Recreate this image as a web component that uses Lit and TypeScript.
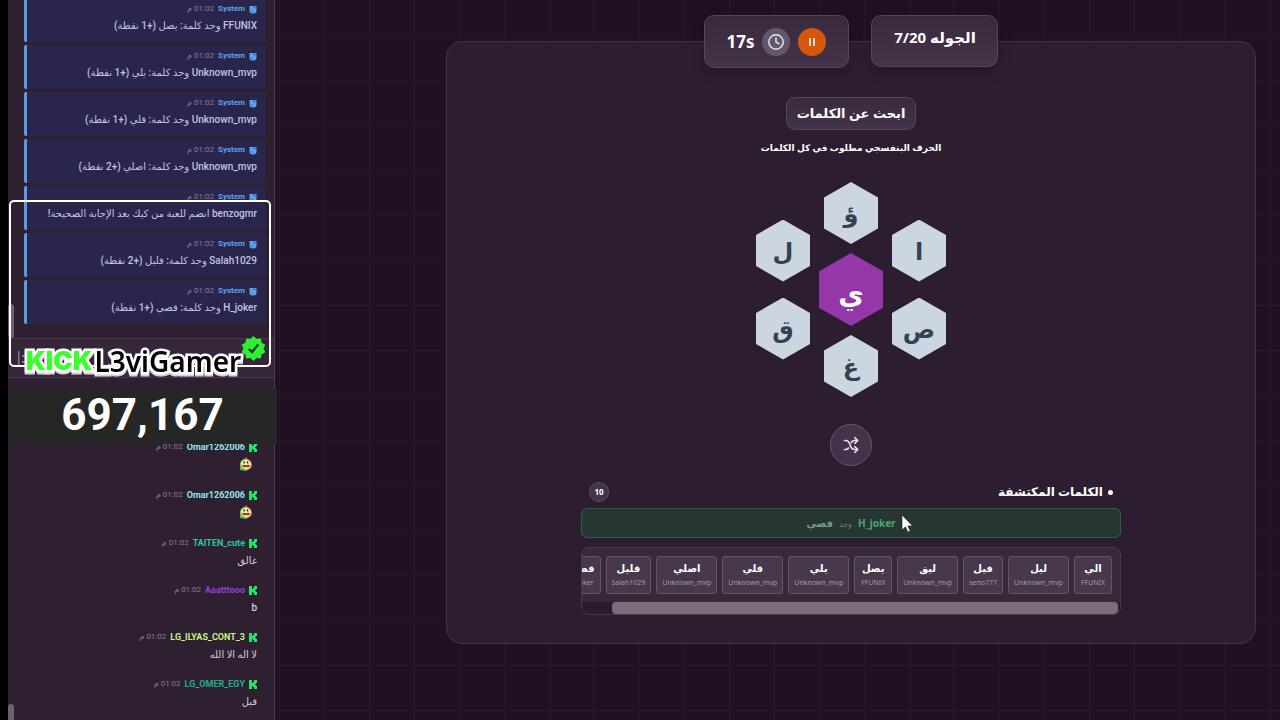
import { LitElement, html, css, svg } from "lit";
import { customElement, property } from "lit/decorators.js";

interface SystemLine {
  text: string;
}
interface ChatLine {
  user: string;
  tone: string;
  text?: string;
}
interface FoundWord {
  word: string;
  by: string;
}

const SYSTEM: SystemLine[] = [
  { text: "FFUNIX وجد كلمة: يصل (+1 نقطة)" },
  { text: "Unknown_mvp وجد كلمة: يلي (+1 نقطة)" },
  { text: "Unknown_mvp وجد كلمة: قلي (+1 نقطة)" },
  { text: "Unknown_mvp وجد كلمة: اصلي (+2 نقطة)" },
  { text: "benzogmr انضم للعبة من كيك بعد الإجابة الصحيحة!" },
  { text: "Salah1029 وجد كلمة: قليل (+2 نقطة)" },
  { text: "H_joker وجد كلمة: قصي (+1 نقطة)" },
];

const CHAT: ChatLine[] = [
  { user: "Omar1262006", tone: "ice" },
  { user: "Omar1262006", tone: "ice" },
  { user: "TAITEN_cute", tone: "mint", text: "غالق" },
  { user: "Aaatttooo", tone: "violet", text: "b" },
  { user: "LG_ILYAS_CONT_3", tone: "lime", text: "لا اله الا الله" },
  { user: "LG_OMER_EGY", tone: "teal", text: "قبل" },
];

const WORDS: FoundWord[] = [
  { word: "الي", by: "FFUNIX" },
  { word: "ليل", by: "Unknown_mvp" },
  { word: "قيل", by: "seno777" },
  { word: "ليق", by: "Unknown_mvp" },
  { word: "يصل", by: "FFUNIX" },
  { word: "يلي", by: "Unknown_mvp" },
  { word: "قلي", by: "Unknown_mvp" },
  { word: "اصلي", by: "Unknown_mvp" },
  { word: "قليل", by: "Salah1029" },
  { word: "قصي", by: "H_joker" },
];

const badgePoints = Array.from({ length: 20 }, (_, i) => {
  const r = i % 2 ? 9.6 : 12;
  const a = (i * Math.PI) / 10;
  return `${(12 + r * Math.sin(a)).toFixed(2)},${(12 - r * Math.cos(a)).toFixed(2)}`;
}).join(" ");

const kickIcon = html`<svg class="mark" viewBox="0 0 8 9" aria-hidden="true">
  <path fill="#1fe56b" d="M0 0h3v3h1V2h1V0h3v3H7v1H6v1h1v1h1v3H5V7H4V6H3v3H0z" />
</svg>`;

const systemIcon = html`<svg class="mark" viewBox="0 0 8 9" aria-hidden="true">
  <path fill="#5ea3ee" d="M.5 1h7v4.500a3 3 0 0 1-3 3h-1A3 3 0 0 1 .5 5.500z" />
  <path stroke="#2b3f86" stroke-width=".6" fill="none" d="M4.800 1v1.800H7.500M2 5.500l2 1.200" />
</svg>`;

const emote = html`<svg class="emote" viewBox="0 0 14 14" aria-hidden="true">
  <path fill="#e0432c" d="M4 3 7 0l2 2 3 2 1.500 4-2 4-3-1z" />
  <path fill="#4fbd4a" d="M1 13V6a6 5 0 0 1 6-4l4 3v7l-4 2z" />
  <ellipse cx="7" cy="7.500" rx="5.200" ry="5" fill="#e9f2a9" />
  <path stroke="#2a2030" stroke-width="1.300" d="M5.200 4.200v2.300M8.600 4.200v2.300" />
  <path fill="#c92f22" d="M2.500 8h9l-1.500 2.200H4z" />
</svg>`;

@customElement("chat-entry")
export class ChatEntry extends LitElement {
  @property() user = "";
  @property() tone = "";
  @property() text = "";
  @property({ type: Boolean }) system = false;

  static styles = css`
    :host {
      display: block;
      direction: rtl;
      color: #d6cbdc;
      font-family: Roboto, "DejaVu Sans", sans-serif;
    }
    .entry {
      padding: 6px 9px 8px 12px;
      height: 30px;
      display: flex;
      flex-direction: column;
      gap: 4px;
      margin-bottom: 3px;
    }
    .entry.sys {
      padding-top: 5px;
      padding-bottom: 9px;
      gap: 3px;
      background: #29254b;
      border-left: 3px solid #5b9be6;
      border-radius: 2px;
      color: #c0c3e6;
    }
    .entry.pic {
      margin-bottom: 4px;
    }
    .head {
      display: flex;
      align-items: center;
      gap: 4px;
      height: 12px;
      line-height: 12px;
      font-size: 9px;
    }
    .mark {
      width: 8px;
      height: 9px;
    }
    .user {
      font-weight: 700;
    }
    .sys .user {
      font-size: 8px;
    }
    .time {
      font-size: 8px;
      color: #8b7d93;
    }
    .body {
      font-size: 10px;
      line-height: 16px;
      font-weight: 500;
      white-space: nowrap;
    }
    .emote {
      display: block;
      width: 14px;
      height: 14px;
      margin-right: 4px;
    }
    .blue { color: #5ea3ee; }
    .ice { color: #90ece9; }
    .mint { color: #2cc6a1; }
    .violet { color: #8d43d0; }
    .lime { color: #c5f58b; }
    .teal { color: #19b08c; }
  `;

  render() {
    const kind = this.system ? "sys" : this.text ? "" : "pic";
    return html`<article class="entry ${kind}">
      <div class="head">
        ${this.system ? systemIcon : kickIcon}
        <bdi class="user ${this.tone}">${this.user}</bdi>
        <span class="time">01:02 م</span>
      </div>
      ${this.text ? html`<div class="body">${this.text}</div>` : emote}
    </article>`;
  }
}

@customElement("hex-letter")
export class HexLetter extends LitElement {
  @property() letter = "";
  @property({ type: Boolean, reflect: true }) main = false;

  static styles = css`
    :host {
      display: block;
    }
    .hex {
      display: grid;
      place-items: center;
      width: 54px;
      height: 62px;
      padding: 0;
      border: 0;
      clip-path: polygon(50% 0, 100% 25%, 100% 75%, 50% 100%, 0 75%, 0 25%);
      background: #cbd6e0;
      color: #334155;
      font: 700 24px/32px "Noto Sans", "DejaVu Sans", sans-serif;
    }
    .hex.main {
      width: 64px;
      height: 73px;
      padding-top: 6px;
      background: #9437a8;
      color: #fff;
      font-size: 28px;
    }
  `;

  render() {
    return html`<button class="hex ${this.main ? "main" : ""}" type="button">${this.letter}</button>`;
  }
}

@customElement("app-root")
export class AppRoot extends LitElement {
  static styles = css`
    :host {
      display: block;
      height: 100vh;
      overflow: hidden;
      font-family: "Noto Sans", "DejaVu Sans", sans-serif;
      color: #fff;
      background: #000;
    }
    .shell {
      display: flex;
      height: 100%;
      padding-left: 8px;
      position: relative;
      box-sizing: border-box;
    }
    .side {
      width: 266px;
      flex: none;
      display: flex;
      flex-direction: column;
      background: #2e1f31;
      border-right: 1px solid #4c3b50;
    }
    .feed {
      overflow: hidden;
      display: flex;
      flex-direction: column;
      justify-content: flex-end;
      position: relative;
    }
    .feed.top {
      height: 47%;
      padding: 0 8px 0 16px;
    }
    .feed.top .pad {
      flex: none;
      height: 11px;
    }
    .feed.live {
      flex: 1;
      padding: 0 8px 0 16px;
    }
    .feed.live .pad {
      flex: none;
      height: 1px;
    }
    .thumb {
      position: absolute;
      left: 0;
      bottom: 0;
      width: 6px;
      height: 34px;
      border-radius: 3px;
      background: #6d6170;
    }
    .thumb.short {
      height: 16px;
      border-radius: 3px 3px 0 0;
    }
    .compose {
      display: flex;
      align-items: center;
      gap: 8px;
      height: 38px;
      padding: 0 10px;
      border-top: 1px solid #46364a;
      border-bottom: 1px solid #46364a;
      background: #35263a;
      direction: rtl;
    }
    .compose input {
      flex: 1;
      min-width: 0;
      border: 0;
      padding: 0;
      background: none;
      color: #d6cbdc;
      font: 10px/16px "Noto Sans", "DejaVu Sans", sans-serif;
    }
    .compose button {
      display: grid;
      place-items: center;
      width: 8px;
      height: 14px;
      padding: 0;
      border: 0;
      background: none;
    }

    .frame {
      position: absolute;
      left: 9px;
      top: 200px;
      width: 258px;
      height: 163px;
      border: 2px solid #fff;
      border-radius: 5px;
    }
    .brand {
      position: absolute;
      left: 26px;
      top: 344px;
      display: flex;
      align-items: center;
      gap: 2px;
      height: 34px;
      line-height: 34px;
      direction: ltr;
    }
    .kick,
    .name {
      paint-order: stroke fill;
      filter: drop-shadow(0 2px 0 #d9cfdc);
    }
    .kick {
      font: 900 26px/34px Inter, sans-serif;
      color: #39ff2c;
      -webkit-text-stroke: 5px #fff;
    }
    .name {
      font: 600 28px/34px "Noto Sans", sans-serif;
      color: #060606;
      -webkit-text-stroke: 5px #fff;
    }
    .verified {
      position: absolute;
      left: 241px;
      top: 336px;
      width: 25px;
      height: 25px;
    }
    .counter {
      position: absolute;
      left: 8px;
      top: 389px;
      width: 269px;
      height: 55px;
      background: #262626;
      text-align: center;
      font: 700 44px/53px Roboto, sans-serif;
    }

    .main {
      flex: 1;
      min-width: 0;
      padding: 15px 24px 0 171px;
      background-color: #201022;
      background-image: linear-gradient(#28162b 1px, transparent 1px),
        linear-gradient(90deg, #28162b 1px, transparent 1px);
      background-size: 45px 45px;
      background-position: 4px 35px;
    }
    .status {
      display: flex;
      justify-content: center;
      align-items: flex-start;
      gap: 22px;
      position: relative;
    }
    .chip {
      box-sizing: border-box;
      border: 1px solid #55445a;
      border-radius: 10px;
      background: linear-gradient(#39293d, #44344a);
    }
    .timer {
      display: flex;
      align-items: center;
      gap: 8px;
      height: 53px;
      padding: 0 22px;
      font-size: 17px;
      font-weight: 700;
    }
    .timer,
    .round {
      box-shadow: 0 6px 14px #0003;
    }
    .dot {
      display: grid;
      place-items: center;
      width: 28px;
      height: 28px;
      padding: 0;
      border: 0;
      border-radius: 50%;
      background: #62566a;
    }
    .dot.pause {
      background: #d4570d;
    }
    .round {
      height: 52px;
      width: 127px;
      padding-top: 10px;
      text-align: center;
      direction: rtl;
      font-size: 15px;
      line-height: 22px;
      font-weight: 700;
    }
    .card {
      margin-top: -27px;
      padding: 55px 134px 28px;
      border: 1px solid #43334a;
      border-radius: 16px;
      background: #2c1e30;
      display: flex;
      flex-direction: column;
      align-items: center;
      direction: rtl;
    }
    .title {
      margin: 0;
      height: 33px;
      padding: 0 10px;
      border-radius: 9px;
      font-size: 13px;
      line-height: 31px;
      font-weight: 700;
    }
    .hint {
      margin: 10px 0 0;
      font-size: 9px;
      line-height: 16px;
      font-weight: 700;
    }
    .board {
      display: flex;
      align-items: center;
      gap: 9px;
      margin-top: 26px;
      direction: ltr;
    }
    .column {
      display: flex;
      flex-direction: column;
      align-items: center;
      gap: 16px;
    }
    .column.mid {
      gap: 9px;
    }
    .shuffle {
      display: grid;
      place-items: center;
      width: 42px;
      height: 42px;
      margin-top: 27px;
      padding: 0;
      border: 1px solid #65556a;
      border-radius: 50%;
      background: #43334a;
    }
    .words {
      width: 100%;
      margin-top: 16px;
    }
    .wordhead {
      display: flex;
      align-items: center;
      height: 20px;
      padding: 0 8px;
      gap: 5px;
    }
    .bullet {
      width: 5px;
      height: 5px;
      border-radius: 50%;
      background: #fff;
    }
    .wordhead h2 {
      margin: 0;
      flex: 1;
      font-size: 12px;
      line-height: 20px;
    }
    .count {
      box-sizing: border-box;
      width: 20px;
      height: 20px;
      border: 1px solid #5d4d62;
      border-radius: 50%;
      background: #43334a;
      text-align: center;
      font-size: 8px;
      line-height: 18px;
      font-weight: 700;
    }
    .latest {
      display: flex;
      align-items: center;
      justify-content: center;
      gap: 6px;
      box-sizing: border-box;
      height: 30px;
      margin-top: 6px;
      border: 1px solid #2c5d4b;
      border-radius: 6px;
      background: #273533;
      font-size: 10px;
      font-weight: 700;
      color: #6f9f87;
    }
    .latest .who {
      color: #49a873;
    }
    .latest .verb {
      font-size: 8px;
      font-weight: 400;
      color: #6c7d78;
    }
    .strip {
      margin-top: 9px;
      border: 1px solid #48384d;
      border-radius: 8px;
      background: #38283c;
      overflow: hidden;
    }
    .row {
      display: flex;
      gap: 5px;
      padding: 8px;
      overflow: hidden;
    }
    .word {
      flex: none;
      box-sizing: border-box;
      height: 38px;
      min-width: 38px;
      padding: 3px 5px 0;
      border: 1px solid #64546a;
      border-radius: 3px;
      background: #48384d;
      text-align: center;
      font-size: 10px;
      line-height: 17px;
      font-weight: 700;
    }
    .by {
      display: block;
      font-size: 7px;
      line-height: 12px;
      font-weight: 400;
      color: #a396aa;
    }
    .track {
      height: 12px;
      padding: 0 2px 0 30px;
      background: #2a1c2e;
    }
    .grip {
      height: 12px;
      border-radius: 4px;
      background: #7d6d7b;
    }
    .cursor {
      position: absolute;
      left: 901px;
      top: 514px;
      width: 12px;
      height: 19px;
    }
  `;

  render() {
    return html`<div class="shell">
      <aside class="side">
        <section class="feed top">
          ${SYSTEM.map(
            (m) => html`<chat-entry system user="System" tone="blue" .text=${m.text}></chat-entry>`,
          )}
          <div class="pad"></div>
          <div class="thumb"></div>
        </section>
        <form class="compose">
          <input type="text" aria-label="رسالة" />
          <button type="button" aria-label="خيارات">
            <svg width="8" height="14" viewBox="0 0 8 14" fill="#85778b">
              <path d="M0 0h1.500v14H0zM4 4h3v2H4zM4 10h3v2H4z" />
            </svg>
          </button>
        </form>
        <section class="feed live">
          ${CHAT.map(
            (m) => html`<chat-entry .user=${m.user} .tone=${m.tone} .text=${m.text ?? ""}></chat-entry>`,
          )}
          <div class="pad"></div>
          <div class="thumb short"></div>
        </section>
      </aside>

      <main class="main">
        <header class="status">
          <div class="chip timer">
            <span class="secs">17s</span>
            <span class="dot">
              <svg width="18" height="18" viewBox="0 0 18 18" fill="none" stroke="#e9e3ec" stroke-width="1.500" stroke-linecap="round">
                <circle cx="9" cy="9" r="7.200" />
                <path d="M9 4.800V9l3 1.800" />
              </svg>
            </span>
            <button class="dot pause" type="button" aria-label="إيقاف مؤقت">
              <svg width="8" height="8" viewBox="0 0 8 8" fill="#f6d9c4">
                <rect x="1" width="2" height="8" />
                <rect x="5" width="2" height="8" />
              </svg>
            </button>
          </div>
          <div class="chip round">الجوله 7/20</div>
        </header>

        <section class="card">
          <h1 class="chip title">ابحث عن الكلمات</h1>
          <p class="hint">الحرف البنفسجي مطلوب في كل الكلمات</p>
          <div class="board">
            <div class="column">
              <hex-letter letter="ل"></hex-letter>
              <hex-letter letter="ق"></hex-letter>
            </div>
            <div class="column mid">
              <hex-letter letter="ؤ"></hex-letter>
              <hex-letter main letter="ي"></hex-letter>
              <hex-letter letter="غ"></hex-letter>
            </div>
            <div class="column">
              <hex-letter letter="ا"></hex-letter>
              <hex-letter letter="ص"></hex-letter>
            </div>
          </div>
          <button class="shuffle" type="button" aria-label="خلط">
            <svg width="16" height="18" viewBox="0 0 16 18" fill="none" stroke="#e6dfe9" stroke-width="1.600" stroke-linecap="round" stroke-linejoin="round">
              <path d="M1.500 4.500h1.500c2 0 3 1.300 3.800 3.500l.8 2.200c.8 2.200 1.900 3.300 3.900 3.300h3" />
              <path d="M1.500 13.500h1.300c1.200 0 2-.5 2.700-1.500M8.300 6.500c.7-1.300 1.600-2 3-2h3.200" />
              <path d="m11.800 1.700 2.900 2.800-2.900 2.800M11.800 10.700l2.900 2.800-2.900 2.800" />
            </svg>
          </button>

          <section class="words">
            <div class="wordhead">
              <span class="bullet"></span>
              <h2>الكلمات المكتشفة</h2>
              <span class="count">10</span>
            </div>
            <div class="latest">
              <bdi class="who">H_joker</bdi>
              <span class="verb">وجد</span>
              <span>قصي</span>
            </div>
            <div class="strip">
              <div class="row">
                ${WORDS.map(
                  (w) => html`<div class="word">${w.word}<bdi class="by">${w.by}</bdi></div>`,
                )}
              </div>
              <div class="track"><div class="grip"></div></div>
            </div>
          </section>
        </section>
      </main>

      <div class="frame"></div>
      <div class="brand"><span class="kick">KICK</span><span class="name">L3viGamer</span></div>
      <svg class="verified" viewBox="0 0 24 24" aria-hidden="true">
        ${svg`<polygon points=${badgePoints} fill="#2fee35" />`}
        <path d="m7.500 12.500 3.200 3L16.500 8" fill="none" stroke="#0d3a12" stroke-width="2.200" />
      </svg>
      <div class="counter">697,167</div>
      <svg class="cursor" viewBox="0 0 12 19" aria-hidden="true">
        <path d="M1 1v15l3.500-3.200 2.300 5.200 2.400-1-2.300-5.100H11.500z" fill="#fff" stroke="#222" stroke-width=".6" />
      </svg>
    </div>`;
  }
}
